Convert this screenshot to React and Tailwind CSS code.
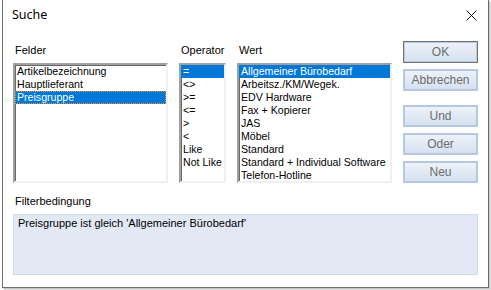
import React from "react";

const font = { fontFamily: '"Liberation Sans", Arial, sans-serif' };

function ListBox({ items, selected, focus, width }) {
  return (
    <div
      className={`${width} h-[120px] border-2 border-t-[#a0a0a0] border-l-[#a0a0a0] border-b-[#f0f0f0] border-r-[#f0f0f0] bg-white shadow-[inset_1px_1px_0_#696969] overflow-hidden`}
    >
      <div>
        {items.map((it, i) => (
          <div
            key={i}
            className={`h-[13px] leading-[13px] px-[2px] text-[10.6px] whitespace-nowrap ${
              i === selected ? "bg-[#0078d7] text-white" : "text-black"
            } ${i === selected && focus ? "outline outline-1 outline-dotted outline-[#ff8c2a] -outline-offset-1" : ""}`}
          >
            {it}
          </div>
        ))}
      </div>
    </div>
  );
}

function Btn({ children, isDefault }) {
  return (
    <div
      className={`w-[75px] h-[22px] flex items-center justify-center text-[12px] text-[#6d6d6d] bg-gradient-to-b from-[#edf2f9] to-[#d6e1ef] ${
        isDefault
          ? "border border-[#707070] shadow-[inset_0_0_0_1px_#b9cbe2]"
          : "border-2 border-[#b4c8e2]"
      }`}
    >
      {children}
    </div>
  );
}

export default function App() {
  return (
    <div className="w-[491px] h-[290px] bg-white" style={font}>
      <div className="ml-[2px] w-[487px] h-[288px] border-l border-r border-b border-[#6e6e6e] bg-white shadow-[1px_1px_0_#c4c4c4,2px_2px_0_#e2e2e2] flex flex-col">
        {/* title bar */}
        <div className="h-[31px] flex items-center justify-between pl-[9px] pr-[11px]">
          <span className="text-[12.5px] text-black" style={{ fontFamily: '"Noto Sans", "Liberation Sans", sans-serif' }}>Suche</span>
          <svg width="11" height="11" viewBox="0 0 11 11">
            <path d="M0.5 0.5 L10.5 10.5 M10.5 0.5 L0.5 10.5" stroke="#111" strokeWidth="1" />
          </svg>
        </div>
        {/* main */}
        <div className="flex pl-[10px] pt-[10px]">
          <div className="flex gap-[11px] pt-[3px]">
            <div className="flex flex-col">
              <div className="h-[13px] leading-[13px] text-[11px] ml-[2px] text-black">Felder</div>
              <div className="mt-[6px]">
                <ListBox
                  width="w-[155px]"
                  items={["Artikelbezeichnung", "Hauptlieferant", "Preisgruppe"]}
                  selected={2}
                  focus
                />
              </div>
            </div>
            <div className="flex flex-col">
              <div className="h-[13px] leading-[13px] text-[11px] ml-[2px] text-black">Operator</div>
              <div className="mt-[6px]">
                <ListBox
                  width="w-[47px]"
                  items={["=", "<>", ">=", "<=", ">", "<", "Like", "Not Like"]}
                  selected={0}
                />
              </div>
            </div>
            <div className="flex flex-col">
              <div className="h-[13px] leading-[13px] text-[11px] ml-[2px] text-black">Wert</div>
              <div className="mt-[6px]">
                <ListBox
                  width="w-[155px]"
                  items={[
                    "Allgemeiner Bürobedarf",
                    "Arbeitsz./KM/Wegek.",
                    "EDV Hardware",
                    "Fax + Kopierer",
                    "JAS",
                    "Möbel",
                    "Standard",
                    "Standard + Individual Software",
                    "Telefon-Hotline",
                  ]}
                  selected={0}
                />
              </div>
            </div>
          </div>
          <div className="ml-[11px] flex flex-col">
            <Btn isDefault>OK</Btn>
            <div className="mt-[6px]"><Btn>Abbrechen</Btn></div>
            <div className="mt-[14px]"><Btn>Und</Btn></div>
            <div className="mt-[6px]"><Btn>Oder</Btn></div>
            <div className="mt-[6px]"><Btn>Neu</Btn></div>
          </div>
        </div>
        {/* filter */}
        <div className="pl-[10px] mt-[12px]">
          <div className="h-[13px] leading-[13px] text-[11px] ml-[2px] text-black">Filterbedingung</div>
          <div className="mt-[6px] w-[465px] h-[61px] bg-[#e2e9f5] border border-[#d3dbe8] px-[4px] pt-[2px] text-[11px] leading-[13px] text-black">
            Preisgruppe ist gleich 'Allgemeiner Bürobedarf'
          </div>
        </div>
      </div>
    </div>
  );
}
